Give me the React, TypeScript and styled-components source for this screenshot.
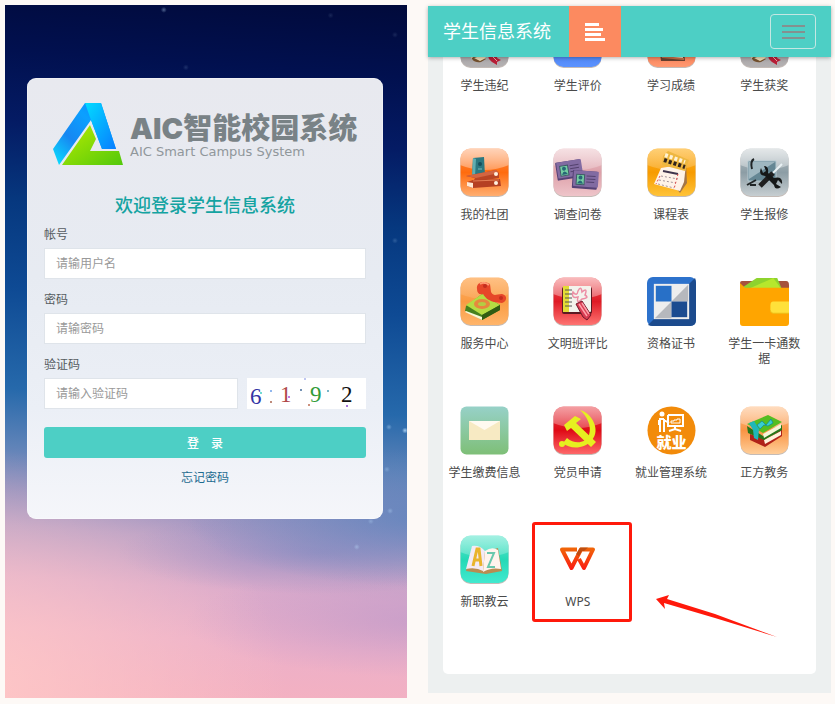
import React from "react";
import styled, { createGlobalStyle } from "styled-components";

const GlobalStyle = createGlobalStyle`
  *, *::before, *::after { box-sizing: border-box; }
  body {
    margin: 0;
    background: #fdf9f6;
    font-family: "Noto Sans", "Noto Sans CJK SC", sans-serif;
    font-size: 12px;
    color: #4a4a4a;
  }
`;

const Page = styled.main`
  display: grid;
  grid-template-columns: 402fr 403fr;
  column-gap: 21px;
  min-height: 100vh;
  padding: 5px 4px 6px 5px;
`;

/* ---------- login screen ---------- */

const star = (x: number, y: number, alpha: number) =>
  `radial-gradient(circle at ${x}% ${y}%, rgba(190,225,255,${alpha}) 0, rgba(190,225,255,0) 3px)`;

const LoginScreen = styled.section`
  padding: 73px 24px 24px 22px;
  background:
    ${star(39.5, 0.7, 0.4)}, ${star(45, 9, 0.15)}, ${star(81, 1.5, 0.12)},
    ${star(95.5, 60.9, 0.4)}, ${star(97, 4.3, 0.12)}, ${star(99.5, 61.4, 0.8)},
    ${star(95.8, 73, 0.35)}, ${star(91, 74.5, 0.3)}, ${star(87.5, 78.2, 0.4)},
    ${star(97, 34, 0.2)}, ${star(95, 67, 0.3)},
    radial-gradient(ellipse 60% 10% at 105% 74%, rgba(92,132,190,0.8), rgba(92,132,190,0)),
    radial-gradient(ellipse 50% 6% at 78% 79%, rgba(132,132,192,0.45), rgba(132,132,192,0)),
    radial-gradient(ellipse 60% 8% at 105% 89%, rgba(178,145,200,0.5), rgba(178,145,200,0)),
    radial-gradient(ellipse 80% 34% at -10% 98%, rgba(255,202,200,0.9), rgba(255,202,200,0)),
    linear-gradient(184deg, #010a3b 0%, #01104f 10%, #041b64 20%, #06387f 31%, #0e4a94 43%,
      #2669ab 57%, #5f83b8 65%, #9391bf 71%, #b8a0c6 76%, #dcabcb 83%, #ecb0c9 90%, #f6b1bf 100%);
`;

const LoginCard = styled.form`
  display: flex;
  flex-direction: column;
  padding: 25px 17px 31px;
  border-radius: 9px;
  background: linear-gradient(#e8e9ef, #e7ebf2 45%, #ebeff6 75%, #f5f6fa);
  box-shadow: inset 0 0 0 1px rgba(255, 255, 255, 0.35);
`;

const Logo = styled.div`
  display: flex;
  gap: 7px;
  margin: 0 0 28px 9px;
  svg { flex: none; }
`;

const Wordmark = styled.div`
  padding-top: 5px;
  color: #798286;
  white-space: nowrap;
`;

const WordmarkMain = styled.div`
  font: 900 29px/42px Inter, "Noto Sans CJK SC", sans-serif;
  height: 36px;
`;

const WordmarkSub = styled.div`
  font: 400 13px/16px "DejaVu Sans", sans-serif;
  color: #90979b;
`;

const Welcome = styled.h1`
  margin: 0 0 7px;
  font: 500 18px/24px "Noto Sans CJK SC", sans-serif;
  height: 24px;
  text-align: center;
  color: #14a3a1;
  line-height: 20px;
`;

const Field = styled.div`
  display: flex;
  flex-direction: column;
  gap: 3px;
  margin-bottom: 11px;
`;

const Label = styled.label`
  line-height: 20px;
  color: #555b60;
`;

const Input = styled.input`
  flex: 1;
  width: 100%;
  min-width: 0;
  height: 31px;
  min-height: 31px;
  padding: 0 11px;
  border: 1px solid #dfe4ea;
  background: #fff;
  font: inherit;
  color: #555;
  &::placeholder { color: #999; opacity: 1; }
`;

const CaptchaRow = styled.div`
  display: flex;
  gap: 9px;
  svg { flex: none; background: #fff; }
`;

const SubmitButton = styled.button`
  height: 31px;
  margin-top: 7px;
  border: 0;
  border-radius: 3px;
  background: #4dcfc5;
  font: 500 12px/20px "Noto Sans CJK SC", sans-serif;
  color: #fff;
`;

const ForgotLink = styled.a`
  align-self: center;
  margin-top: 10px;
  line-height: 20px;
  color: #1d6b90;
  text-decoration: none;
`;

/* ---------- portal screen ---------- */

const PortalScreen = styled.section`
  margin: 1px 0 5px;
  background: #edf0f0;
`;

const Header = styled.header`
  position: relative;
  z-index: 1;
  display: flex;
  align-items: center;
  height: 51px;
  padding: 0 15px;
  background: #4dcfc5;
  box-shadow: 0 1px 4px rgba(0, 0, 0, 0.3);
`;

const Brand = styled.h2`
  margin: 0 18px 2px 0;
  font: 400 18px/27px "Noto Sans CJK SC", sans-serif;
  color: #fff;
`;

const SideToggle = styled.button`
  display: grid;
  place-items: center;
  width: 52px;
  height: 51px;
  padding: 0;
  border: 0;
  background: #fc8a60;
`;

const MenuButton = styled.button`
  display: grid;
  place-items: center;
  width: 46px;
  height: 35px;
  margin-left: auto;
  padding: 0;
  border: 1px solid #c4e7e3;
  border-radius: 4px;
  background: transparent;
`;

const Panel = styled.div`
  margin: -48px 15px 19px;
  padding-bottom: 20px;
  border-radius: 5px;
  background: #fff;
`;

const AppGrid = styled.ul`
  display: grid;
  grid-template-columns: repeat(4, 1fr);
  grid-auto-rows: 129px;
  margin: 0 5px 0 -5px;
  padding: 0;
  list-style: none;
`;

const AppCell = styled.li`
  position: relative;
  display: flex;
  justify-content: center;
  align-items: flex-start;
`;

const AppLink = styled.a`
  display: flex;
  flex-direction: column;
  align-items: center;
  gap: 10px;
  width: 80px;
  padding-top: 10px;
  line-height: 15px;
  text-align: center;
  color: #4a4a4a;
  text-decoration: none;
`;

const Highlight = styled.div`
  position: absolute;
  top: -3px;
  left: 1px;
  width: 100px;
  height: 100px;
  border: 3px solid #ff190b;
  border-radius: 3px;
  pointer-events: none;
`;

const Arrow = styled.svg`
  position: absolute;
  top: 69px;
  left: 124px;
  pointer-events: none;
`;

/* ---------- drawings ---------- */

const LogoMark = () => (
  <svg width="70" height="63" viewBox="0 0 70 63" aria-hidden="true">
    <defs>
      <linearGradient id="lgA" x1="1" y1="0" x2="0" y2="1">
        <stop offset="0" stopColor="#1277ff" /><stop offset=".35" stopColor="#0ba0ff" />
        <stop offset=".65" stopColor="#1787f2" /><stop offset="1" stopColor="#09e6ff" />
      </linearGradient>
      <linearGradient id="lgB" x1="0" y1="0" x2="1" y2="1">
        <stop offset="0" stopColor="#02dcff" /><stop offset="1" stopColor="#087dff" />
      </linearGradient>
      <linearGradient id="lgC" x1="0" y1="0" x2="1" y2="1">
        <stop offset="0" stopColor="#b9ec00" /><stop offset="1" stopColor="#52c80c" />
      </linearGradient>
    </defs>
    <path d="M32 0H48L63 46H49L38 17 6 62 0 46Z" fill="url(#lgA)" />
    <path d="M32 0H48L63 46H49L38 17Z" fill="url(#lgB)" />
    <path d="M37 22L43 36 37 48H66L70 62H9Z" fill="url(#lgC)" />
  </svg>
);

const Captcha = () => (
  <svg width="119" height="31" viewBox="0 0 119 31" role="img" aria-label="验证码图片">
    <g fontFamily="Liberation Serif" fontSize="23">
      <text x="3" y="26" fill="#3434a4">6</text>
      <text x="33" y="24" fill="#b04848">1</text>
      <text x="63" y="24" fill="#329c38">9</text>
      <text x="94" y="24" fill="#111">2</text>
    </g>
    <circle cx="14" cy="15" r="1" fill="#45cfc5" /><circle cx="24" cy="13" r="1" fill="#6c9fe8" />
    <circle cx="24" cy="24" r="1" fill="#a8654f" /><circle cx="42" cy="19" r="1" fill="#b34fd6" />
    <circle cx="54" cy="12" r="1" fill="#456d9a" /><circle cx="62" cy="27" r="1" fill="#bb6b51" />
    <circle cx="58" cy="1" r="1" fill="#aab4ee" /><circle cx="81" cy="13" r="1" fill="#4e9db7" />
    <circle cx="100" cy="28" r="1" fill="#8d4bd0" />
  </svg>
);

type TileProps = { id: string; top: string; mid: string; bottom: string; gloss?: number; children?: React.ReactNode };

const Tile = ({ id, top, mid, bottom, gloss = 0.4, children }: TileProps) => (
  <svg width="49" height="49" viewBox="0 0 49 49" aria-hidden="true">
    <defs>
      <linearGradient id={`${id}-bg`} x1="0" y1="0" x2="0" y2="1">
        <stop offset="0" stopColor={top} /><stop offset=".5" stopColor={mid} /><stop offset="1" stopColor={bottom} />
      </linearGradient>
      <linearGradient id={`${id}-gloss`} x1="0" y1="0" x2="0" y2="1">
        <stop offset="0" stopColor="#fff" /><stop offset="1" stopColor="#fff" stopOpacity=".5" />
      </linearGradient>
      <clipPath id={`${id}-clip`}><rect x=".5" y=".5" width="48" height="47.5" rx="10" /></clipPath>
    </defs>
    <rect x=".5" y="1" width="48" height="48" rx="10" fill="#9c8d86" opacity=".6" />
    <g clipPath={`url(#${id}-clip)`}>
      <rect width="49" height="49" fill={`url(#${id}-bg)`} />
      <path d="M0 0H49V17Q25 27 0 17Z" fill={`url(#${id}-gloss)`} opacity={gloss + 0.2} />
      {children}
    </g>
  </svg>
);

const ScrollIcon = ({ id }: { id: string }) => (
  <Tile id={id} top="#c9c7c8" mid="#a19da0" bottom="#b5b2b3">
    <path d="M8 34L29 15 37 23 21 42Q15 44 12 40Z" fill="#e9d2a4" />
    <path d="M12 39Q19 33 26 40L21 43Q15 44 12 40Z" fill="#74512f" />
    <path d="M14 39L23 36 26 39 20 42Z" fill="#eeddb8" />
    <path d="M28 37L38 35 37 39 41 41 37 43 37 46 32 43 29 40Z" fill="#b91e36" />
    <path d="M33 38L37 42" stroke="#f3a4a8" />
  </Tile>
);

const ReviewIcon = () => (
  <Tile id="review" top="#6aa1ff" mid="#4a7df0" bottom="#5b93ff" gloss={0}>
    <path d="M14 13H35V29H24L18 34V29H14Z" fill="#fff" />
  </Tile>
);

const ScoreIcon = () => (
  <Tile id="score" top="#ffb296" mid="#f77046" bottom="#ff9a72">
    <path d="M10 9H35L38 42H14Z" fill="#68402e" />
    <path d="M13 12H33L36 39H15Z" fill="#fff3df" />
    <path d="M15 38L37 40" stroke="#c76f47" strokeWidth="2" />
  </Tile>
);

const ClubIcon = () => (
  <Tile id="club" top="#ff9453" mid="#ff6b0d" bottom="#ffb175">
    <path d="M13 10L24 9 25 28 12 29Z" fill="#2c7880" /><path d="M13 10L16 11 15 28 12 29Z" fill="#61adb0" />
    <circle cx="20" cy="16" r="2" fill="#174f5b" /><path d="M18 21H22" stroke="#7bb9b8" />
    <path d="M6 28L36 22 39 25V30L13 34 15 30Z" fill="#b94524" />
    <path d="M6 28L36 22 39 25 16 30Z" fill="#d36541" />
    <path d="M7 34L13 32 40 31 41 38 13 40 7 38Z" fill="#b54023" />
    <path d="M7 34L13 35V40L7 38Z" fill="#ffe8d3" /><path d="M13 33L39 32" stroke="#e27e56" />
    <circle cx="36" cy="26" r="2" fill="#fff0df" /><circle cx="36" cy="35" r="2" fill="#fff0df" />
  </Tile>
);

const Badge = ({ x, y, r }: { x: number; y: number; r: number }) => (
  <g transform={`translate(${x} ${y}) rotate(${r})`}>
    <rect width="25" height="18" rx="1" fill="#554175" /><rect x="1" width="25" height="16" rx="1" fill="#826ba2" />
    <rect x="4" y="4" width="8" height="10" fill="#74cda2" stroke="#405b68" />
    <circle cx="8" cy="7" r="2" fill="#276776" /><path d="M5 13Q8 7 11 13Z" fill="#276776" />
    <path d="M14 5H23M14 8H23M14 11H22" stroke="#54426f" />
  </g>
);

const SurveyIcon = () => (
  <Tile id="survey" top="#eec9ce" mid="#dda0a9" bottom="#efc6cb" gloss={0.25}>
    <Badge x={2} y={15} r={-9} /><Badge x={20} y={22} r={4} />
  </Tile>
);

const ScheduleIcon = () => (
  <Tile id="schedule" top="#ffb62e" mid="#f79b00" bottom="#ffc53b" gloss={0.15}>
    <path d="M16 23L39 16 40 35 33 45Z" fill="#a47648" />
    <path d="M14 20L39 16 37 34 33 43 7 36Z" fill="#fff3e8" />
    <path d="M16 8L21 3 42 12 38 23 15 17Z" fill="#eeb740" />
    <path d="M17 12L38 19" stroke="#30231d" strokeWidth="4" strokeDasharray="3 2" />
    <path d="M18 7L38 14" stroke="#fff2d4" strokeWidth="4" strokeDasharray="3 2" />
    <path d="M16 23L31 26" stroke="#40364c" strokeWidth="2" />
    <path d="M14 28L31 31M12 32L29 35M11 36L27 40" stroke="#a5949a" strokeDasharray="2 2" />
    <path d="M31 26L27 41M13 28L9 36" stroke="#df4747" strokeDasharray="2 2" />
  </Tile>
);

const RepairIcon = () => (
  <Tile id="repair" top="#bdc5c9" mid="#8c9da5" bottom="#c9d0d3">
    <path d="M8 13H36V33H8Z" fill="#658794" stroke="#b5c9d1" />
    <path d="M9 14H35L9 31Z" fill="#9fb7c0" />
    <path d="M14 11Q10 13 12 21M7 37L16 32M10 37H16" stroke="#202527" strokeWidth="2" fill="none" />
    <path d="M42 16L33 25" stroke="#e9f1f4" strokeWidth="2" />
    <path d="M33 25L20 38" stroke="#202020" strokeWidth="5" />
    <path d="M21 20Q18 27 25 28L34 37Q35 43 41 39L36 36 38 32 42 36Q43 28 34 30L28 25Q29 18 24 18L26 23 23 25Z" fill="#151818" />
  </Tile>
);

const ServiceIcon = () => (
  <Tile id="service" top="#ffb267" mid="#fa9b43" bottom="#ffb66c" gloss={0}>
    <path d="M6 29L22 17 40 28V33L22 43 5 34Z" fill="#47811e" />
    <path d="M6 34L22 40V43L5 35Z" fill="#f7f8d9" />
    <path d="M6 28L22 17 40 28 22 38Z" fill="#b5dc43" /><path d="M22 38L40 28V33L22 43Z" fill="#315c13" />
    <ellipse cx="22" cy="27" rx="8" ry="5" fill="#e6883e" /><ellipse cx="22" cy="27" rx="4" ry="2" fill="#b4cd43" />
    <path d="M17 12C16 5 24 3 30 7L31 15C34 20 36 17 42 17 48 18 47 25 42 26L34 25C27 23 25 20 23 17 19 18 17 16 17 12Z" fill="#e64629" />
    <path d="M20 7Q24 4 29 8" stroke="#ff9b73" fill="none" strokeWidth="2" /><circle cx="25" cy="9" r="2" fill="#c52d1e" />
    <circle cx="41" cy="21" r="2" fill="#c52d1e" />
  </Tile>
);

const ClassIcon = () => (
  <Tile id="class" top="#f0595d" mid="#df1b25" bottom="#ff7775">
    <rect x="9" y="10" width="30" height="27" rx="2" fill="#5c1a22" />
    <rect x="10" y="9" width="28" height="26" rx="1" fill="#f3f3ec" /><rect x="10" y="9" width="6" height="26" fill="#e2dc36" />
    <path d="M12 13H19M12 17H19M12 21H19M12 25H19M12 29H19" stroke="#555" />
    <path d="M20 15Q24 20 25 14 28 8 29 15 35 10 32 18 37 21 29 22 23 28 25 20 18 22 20 15Z" fill="none" stroke="#ec8ea4" strokeWidth="1.5" />
    <path d="M23 27L29 24 38 38 34 43 30 40Z" fill="#d83c52" stroke="#70192a" />
    <path d="M26 27L34 39M29 26L36 37" stroke="#ffa2aa" strokeWidth="1.5" />
  </Tile>
);

const CertificateIcon = () => (
  <svg width="49" height="49" viewBox="0 0 50 50" aria-hidden="true">
    <rect width="50" height="50" rx="6" fill="#2d72cc" />
    <path d="M49 1L1 49Q3 50 6 50H44Q50 50 50 44V6Q50 3 49 1Z" fill="#1c4b8d" />
    <rect x="7" y="7" width="36" height="36" fill="#eee" /><path d="M42 8V25H25V42H8Z" fill="#b6b8bd" />
    <rect x="9" y="9" width="16" height="16" fill="#2870c7" /><rect x="25" y="25" width="16" height="16" fill="#1b4b90" />
  </svg>
);

const WalletIcon = () => (
  <svg width="49" height="49" viewBox="0 0 50 50" aria-hidden="true">
    <path d="M2 4H47Q50 4 50 8V20H0V6Q0 4 2 4Z" fill="#a6523d" />
    <path d="M2 11L17 1H38L43 13H4Z" fill="#8ed32e" /><path d="M9 12L34 1 42 12Z" fill="#b6e72d" />
    <path d="M0 6L5 11H50V47Q50 50 47 50H3Q0 50 0 47Z" fill="#ffa500" />
    <path d="M50 25H34Q31 25 31 29V33Q31 37 34 37H50Z" fill="#ffe13a" />
    <path d="M31 34Q31 37 34 37H50" fill="none" stroke="#eebd18" />
  </svg>
);

const MailIcon = () => (
  <svg width="49" height="49" viewBox="0 0 49 49" aria-hidden="true">
    <defs><linearGradient id="mail" x1="0" y1="0" x2="0" y2="1"><stop stopColor="#97d1c8" /><stop offset="1" stopColor="#7ebf77" /></linearGradient></defs>
    <rect x=".5" y=".5" width="48" height="48" rx="6" fill="url(#mail)" />
    <rect x="9" y="15" width="31" height="19" fill="#f7eac3" /><path d="M9 15L24.500 24 40 15Z" fill="#fffaf0" />
  </svg>
);

const PartyIcon = () => (
  <Tile id="party" top="#e9434b" mid="#df0b16" bottom="#ff6b6c" gloss={0.3}>
    <path d="M27 4C39 7 48 24 39 34 31 44 16 43 10 37L14 32C22 39 33 37 36 29 39 20 34 10 27 4Z" fill="#e6ef20" />
    <path d="M11 19L22 10 28 13 23 17 43 36 38 41 18 22 14 25Z" fill="#e6ef20" />
    <circle cx="9" cy="38" r="3" fill="#e6ef20" />
  </Tile>
);

const JobIcon = () => (
  <svg width="49" height="49" viewBox="0 0 49 49" aria-hidden="true">
    <circle cx="24.500" cy="24.500" r="24" fill="#f28b0a" />
    <circle cx="15" cy="8" r="2.500" fill="#fff" />
    <path d="M12 13H17M13 13V26M17 13V26M12 14V19M17 14L22 17M21 9H36V20H21V9M28 20V24M22 25L28 23 34 25" fill="none" stroke="#fff" strokeWidth="2" />
    <path d="M24 17V15H27V14H30V13H33V17Z" fill="none" stroke="#fff" />
    <text x="24.500" y="42" textAnchor="middle" fontFamily="Noto Sans CJK SC" fontSize="15" fontWeight="900" fill="#fff">就业</text>
  </svg>
);

const BooksIcon = () => (
  <Tile id="books" top="#ffc18c" mid="#f99444" bottom="#ffd09c" gloss={0.25}>
    <path d="M10 28L26 34 42 23V30L25 41 10 34Z" fill="#b02219" />
    <path d="M24 34L41 25V29L25 38Z" fill="#fff1dc" />
    <path d="M7 20L23 30 42 19V24L24 34 8 27Z" fill="#257519" />
    <path d="M23 28L41 18V22L24 32Z" fill="#f4f6da" />
    <path d="M7 18L28 9 42 16 23 27Z" fill="#54bd22" />
    <path d="M9 17L14 15 19 23 18 34 14 32 13 24Z" fill="#20b7b8" />
    <path d="M17 19L22 15 26 19 31 13 33 17 28 20 24 19 20 23Z" fill="#35ced0" stroke="#138791" strokeWidth=".7" />
  </Tile>
);

const CloudIcon = () => (
  <Tile id="cloud" top="#6ae8d1" mid="#25d9b6" bottom="#43ead0" gloss={0.2}>
    <path d="M6 36L12 13 25 17 38 13 42 36 26 39Z" fill="#b98c51" />
    <path d="M6 34L12 11Q20 10 25 16L23 36Q16 32 6 34Z" fill="#f3eaf5" />
    <path d="M25 16Q32 11 38 15L41 34Q31 32 23 37Z" fill="#fff4ed" />
    <path d="M13 31L17 14H19L21 31M14 25H21" fill="none" stroke="#e9b42c" strokeWidth="3" />
    <path d="M27 18H34L28 32H35" fill="none" stroke="#69c8ad" strokeWidth="2" />
  </Tile>
);

const WpsIcon = () => (
  <svg width="49" height="49" viewBox="0 0 49 49" aria-hidden="true">
    <defs>
      <linearGradient id="wps" gradientUnits="userSpaceOnUse" x1="0" y1="12" x2="0" y2="36">
        <stop stopColor="#f06a08" /><stop offset="1" stopColor="#fb1514" />
      </linearGradient>
    </defs>
    <g fill="none" stroke="url(#wps)" strokeWidth="4" strokeLinejoin="round">
      <path d="M24 14.500H9L18.500 33 28 14.500H40L31 33 26 24" />
    </g>
    <path d="M27 12.500H35L31 16H29L26 21 23 19Z" fill="#a94512" opacity=".7" />
  </svg>
);

const apps: { name: string; icon: React.ReactNode; marked?: boolean }[] = [
  { name: "学生违纪", icon: <ScrollIcon id="discipline" /> },
  { name: "学生评价", icon: <ReviewIcon /> },
  { name: "学习成绩", icon: <ScoreIcon /> },
  { name: "学生获奖", icon: <ScrollIcon id="award" /> },
  { name: "我的社团", icon: <ClubIcon /> },
  { name: "调查问卷", icon: <SurveyIcon /> },
  { name: "课程表", icon: <ScheduleIcon /> },
  { name: "学生报修", icon: <RepairIcon /> },
  { name: "服务中心", icon: <ServiceIcon /> },
  { name: "文明班评比", icon: <ClassIcon /> },
  { name: "资格证书", icon: <CertificateIcon /> },
  { name: "学生一卡通数据", icon: <WalletIcon /> },
  { name: "学生缴费信息", icon: <MailIcon /> },
  { name: "党员申请", icon: <PartyIcon /> },
  { name: "就业管理系统", icon: <JobIcon /> },
  { name: "正方教务", icon: <BooksIcon /> },
  { name: "新职教云", icon: <CloudIcon /> },
  { name: "WPS", icon: <WpsIcon />, marked: true },
];

export default function App() {
  return (
    <>
      <GlobalStyle />
      <Page>
        <LoginScreen>
          <LoginCard>
            <Logo>
              <LogoMark />
              <Wordmark>
                <WordmarkMain>AIC智能校园系统</WordmarkMain>
                <WordmarkSub>AIC Smart Campus System</WordmarkSub>
              </Wordmark>
            </Logo>
            <Welcome>欢迎登录学生信息系统</Welcome>
            <Field>
              <Label htmlFor="account">帐号</Label>
              <Input id="account" type="text" placeholder="请输用户名" />
            </Field>
            <Field>
              <Label htmlFor="password">密码</Label>
              <Input id="password" type="password" placeholder="请输密码" />
            </Field>
            <Field>
              <Label htmlFor="captcha">验证码</Label>
              <CaptchaRow>
                <Input id="captcha" type="text" placeholder="请输入验证码" />
                <Captcha />
              </CaptchaRow>
            </Field>
            <SubmitButton type="button">登&emsp;录</SubmitButton>
            <ForgotLink href="#forgot">忘记密码</ForgotLink>
          </LoginCard>
        </LoginScreen>
        <PortalScreen>
          <Header>
            <Brand>学生信息系统</Brand>
            <SideToggle type="button" aria-label="侧边栏">
              <svg width="20" height="18" viewBox="0 0 20 18" aria-hidden="true">
                <path d="M0 1.500H14M0 6.500H18M0 11.500H16M0 16.500H20" stroke="#fff" strokeWidth="3" />
              </svg>
            </SideToggle>
            <MenuButton type="button" aria-label="菜单">
              <svg width="23" height="16" viewBox="0 0 23 16" aria-hidden="true">
                <path d="M0 2H23M0 8H23M0 14H23" stroke="#84908f" strokeWidth="2" />
              </svg>
            </MenuButton>
          </Header>
          <Panel>
            <AppGrid>
              {apps.map((app) => (
                <AppCell key={app.name}>
                  <AppLink href="#app">
                    {app.icon}
                    <span>{app.name}</span>
                  </AppLink>
                  {app.marked && (
                    <>
                      <Highlight />
                      <Arrow width="124" height="46" viewBox="0 0 124 46" aria-hidden="true">
                        <path d="M1 5L14 1 12 5 60 20 122 43 60 24 9 9 10 15Z" fill="#ff190b" />
                      </Arrow>
                    </>
                  )}
                </AppCell>
              ))}
            </AppGrid>
          </Panel>
        </PortalScreen>
      </Page>
    </>
  );
}
